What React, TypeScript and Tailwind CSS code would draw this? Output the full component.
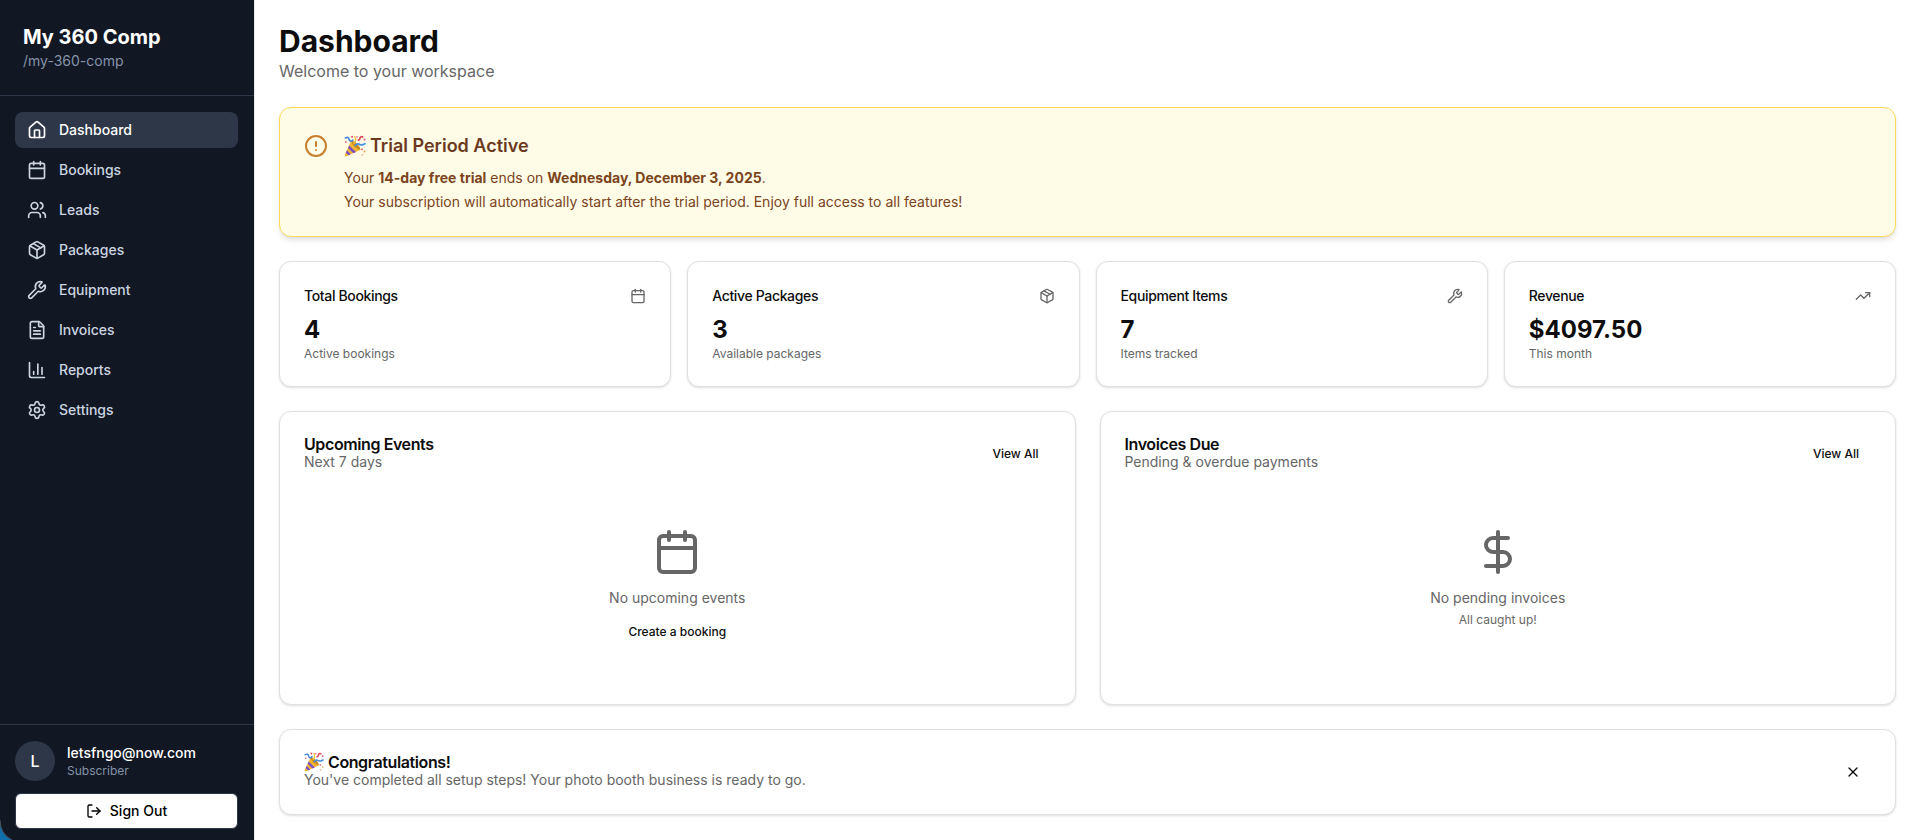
import React, { useState } from 'react';
import {
  Calendar,
  ChartColumn,
  CircleAlert,
  DollarSign,
  FileText,
  House,
  LogOut,
  Package,
  Settings,
  TrendingUp,
  Users,
  Wrench,
  X,
} from 'lucide-react';
import type { LucideIcon } from 'lucide-react';

interface NavItem {
  name: string;
  icon: LucideIcon;
}

interface Stat {
  title: string;
  value: string;
  description: string;
  icon: LucideIcon;
}

const navigation: NavItem[] = [
  { name: 'Dashboard', icon: House },
  { name: 'Bookings', icon: Calendar },
  { name: 'Leads', icon: Users },
  { name: 'Packages', icon: Package },
  { name: 'Equipment', icon: Wrench },
  { name: 'Invoices', icon: FileText },
  { name: 'Reports', icon: ChartColumn },
  { name: 'Settings', icon: Settings },
];

const stats: Stat[] = [
  { title: 'Total Bookings', value: '4', description: 'Active bookings', icon: Calendar },
  { title: 'Active Packages', value: '3', description: 'Available packages', icon: Package },
  { title: 'Equipment Items', value: '7', description: 'Items tracked', icon: Wrench },
  { title: 'Revenue', value: '$4097.50', description: 'This month', icon: TrendingUp },
];

function PartyPopper({ className }: { className: string }) {
  return (
    <svg viewBox="0 0 24 24" className={className} aria-hidden="true">
      <path d="M8 6 L18 16 L2.2 23.4 Q0.6 23.6 0.8 21.8 Z" fill="#f2b632" />
      <path d="M5.6 11.4 L13 18.6 L10.2 19.8 L4.4 14.2 Z" fill="#7a4fc4" />
      <path d="M3.2 16.6 L7.4 21 L5 22.2 L2 19.4 Z" fill="#7a4fc4" />
      <path d="M8 6 Q11 6.4 14.4 9.6 Q17.6 13 18 16 Q14 15.6 11 12.4 Q7.8 9 8 6 Z" fill="#c98a1e" />
      <path d="M1.4 3.2 Q5 1.4 5.6 5 Q7 8.4 9.6 5.6" fill="none" stroke="#4a86d8" strokeWidth="1.8" strokeLinecap="round" />
      <path d="M12.4 11.4 Q15 8.4 17.6 10.6 Q20 11.4 22.8 9.6" fill="none" stroke="#4a8fe0" strokeWidth="2" strokeLinecap="round" />
      <path d="M11 9 Q14 5.6 11.8 2" fill="none" stroke="#f0c23c" strokeWidth="1.6" strokeLinecap="round" />
      <path d="M15.6 5.6 Q17.6 5.4 17.4 3.2 Q18.6 1 20.4 2.2" fill="none" stroke="#e0475e" strokeWidth="1.8" strokeLinecap="round" />
      <circle cx="8.8" cy="1.8" r="1.1" fill="#e0475e" />
      <circle cx="14.2" cy="2" r="1" fill="#e77a93" />
      <circle cx="22.4" cy="5" r="1.1" fill="#d95c86" />
      <circle cx="2" cy="7.6" r="1" fill="#e06a80" />
      <circle cx="19.6" cy="15.6" r="1" fill="#e0475e" />
      <circle cx="22.4" cy="18" r="1" fill="#e8a04a" />
      <circle cx="20" cy="21.6" r="1" fill="#e8b08a" />
    </svg>
  );
}

function StatCard({ stat }: { stat: Stat }) {
  const Icon = stat.icon;
  return (
    <div className="rounded-xl border border-[#e0e0e0] bg-white p-6 shadow-sm">
      <div className="flex items-center justify-between pb-2">
        <h3 className="text-sm font-medium tracking-tight">{stat.title}</h3>
        <Icon className="size-4 text-[#666666]" />
      </div>
      <div className="text-2xl font-bold">{stat.value}</div>
      <p className="text-xs text-[#666666]">{stat.description}</p>
    </div>
  );
}

interface PanelProps {
  title: string;
  description: string;
  children: React.ReactNode;
}

function Panel({ title, description, children }: PanelProps) {
  return (
    <section className="rounded-xl border border-[#e0e0e0] bg-white p-6 shadow-sm">
      <div className="flex items-center justify-between">
        <div>
          <h2 className="text-base leading-4 font-semibold tracking-tight">{title}</h2>
          <p className="text-sm text-[#666666]">{description}</p>
        </div>
        <button className="h-8 rounded-md px-3 text-xs font-medium hover:bg-gray-100">View All</button>
      </div>
      <div className="mt-6 flex flex-col items-center py-8 text-center">{children}</div>
    </section>
  );
}

function Sidebar() {
  const [active, setActive] = useState('Dashboard');

  return (
    <aside className="relative flex w-[255px] shrink-0 flex-col border-r border-gray-200 bg-[#111723] text-white">
      <div className="border-b border-[#2d3748] px-[23px] pt-[23px] pb-6">
        <h1 className="text-xl font-bold">My 360 Comp</h1>
        <p className="text-sm text-[#8493a8]">/my-360-comp</p>
      </div>

      <nav className="flex flex-1 flex-col gap-1 py-4 pr-4 pl-[15px]">
        {navigation.map(item => (
          <a
            key={item.name}
            href="#"
            onClick={() => setActive(item.name)}
            className={`flex h-9 items-center gap-3 rounded-lg px-3 text-sm font-medium transition-colors ${
              active === item.name ? 'bg-[#2d3748] text-white' : 'text-[#cbd5e0] hover:bg-[#2d3748]'
            }`}
          >
            <item.icon className="size-5" />
            <span>{item.name}</span>
          </a>
        ))}
      </nav>

      <div className="border-t border-[#2d3748] pt-4 pr-4 pb-[11px] pl-[15px]">
        <div className="mb-3 flex items-center gap-3">
          <div className="flex size-10 items-center justify-center rounded-full bg-[#2d3748] font-medium">L</div>
          <div>
            <p className="text-sm font-medium">letsfngo@now.com</p>
            <p className="text-xs text-[#8493a8]">Subscriber</p>
          </div>
        </div>
        <button className="flex h-9 w-full items-center justify-center gap-2 rounded-md border border-[#2d3748] bg-white text-sm font-medium text-black">
          <LogOut className="size-4" />
          Sign Out
        </button>
      </div>

      {/* rounded window corner */}
      <svg viewBox="0 0 12 24" className="absolute bottom-0 left-0 h-6 w-3" aria-hidden="true">
        <path d="M0 4 Q0 18 12 24 L0 24 Z" fill="#0f6fa8" />
        <path d="M0 4 Q0 18 12 24" fill="none" stroke="#4a5260" />
      </svg>
    </aside>
  );
}

function App() {
  const [showCongrats, setShowCongrats] = useState(true);

  return (
    <div className="flex min-h-screen bg-white font-[Inter,sans-serif] text-[#0d0d0d]">
      <Sidebar />

      <main className="flex min-w-0 flex-1 flex-col gap-6 pt-[23px] pr-[9px] pl-6">
        <div>
          <h1 className="text-3xl font-bold">Dashboard</h1>
          <p className="text-[#666666]">Welcome to your workspace</p>
        </div>

        <div className="flex items-start gap-4 rounded-xl border border-[#fcdb5a] bg-[#fefbe6] p-6 shadow-md">
          <CircleAlert className="mt-0.5 size-6 text-[#c67f2b]" />
          <div>
            <h2 className="mb-2 flex items-center gap-1 text-lg leading-7 font-semibold text-[#6b3a1e]">
              <PartyPopper className="size-[22px]" />
              Trial Period Active
            </h2>
            <div className="space-y-1 text-sm text-[#7b441c]">
              <p>
                Your <strong className="font-bold">14-day free trial</strong> ends on{' '}
                <strong className="font-bold">Wednesday, December 3, 2025</strong>.
              </p>
              <p>Your subscription will automatically start after the trial period. Enjoy full access to all features!</p>
            </div>
          </div>
        </div>

        <div className="grid grid-cols-2 gap-4 lg:grid-cols-4">
          {stats.map(stat => (
            <StatCard key={stat.title} stat={stat} />
          ))}
        </div>

        <div className="grid grid-cols-1 gap-6 lg:grid-cols-2">
          <Panel title="Upcoming Events" description="Next 7 days">
            <Calendar className="mb-3 size-12 text-[#666666]" />
            <p className="text-sm text-[#666666]">No upcoming events</p>
            <button className="mt-2 h-8 rounded-md px-3 text-xs font-medium hover:underline">Create a booking</button>
          </Panel>
          <Panel title="Invoices Due" description="Pending &amp; overdue payments">
            <DollarSign className="mb-3 size-12 text-[#666666]" />
            <p className="text-sm text-[#666666]">No pending invoices</p>
            <p className="mt-1 text-xs text-[#666666]">All caught up!</p>
          </Panel>
        </div>

        {showCongrats && (
          <div className="flex items-center justify-between rounded-xl border border-[#e0e0e0] bg-white p-6 shadow-sm">
            <div>
              <h2 className="flex items-center gap-1 text-base leading-4 font-semibold tracking-tight">
                <PartyPopper className="-my-1 size-5" />
                Congratulations!
              </h2>
              <p className="text-sm text-[#666666]">
                You've completed all setup steps! Your photo booth business is ready to go.
              </p>
            </div>
            <button
              aria-label="Dismiss"
              onClick={() => setShowCongrats(false)}
              className="flex size-9 items-center justify-center rounded-md hover:bg-gray-100"
            >
              <X className="size-4" />
            </button>
          </div>
        )}
      </main>
    </div>
  );
}

export default App;
